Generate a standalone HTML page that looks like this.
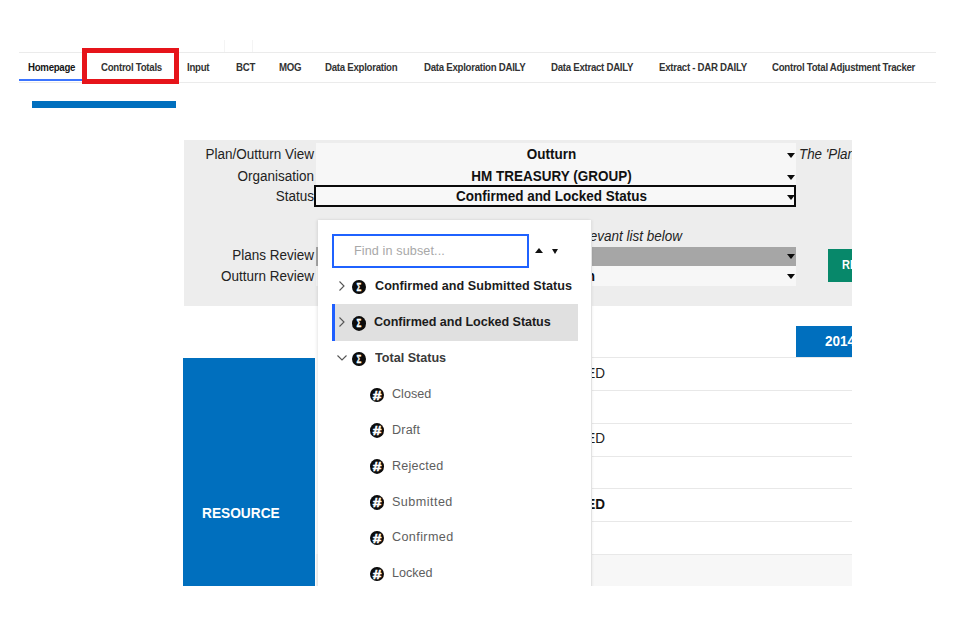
<!DOCTYPE html>
<html lang="en">
<head>
<meta charset="utf-8">
<title>Control Totals</title>
<style>
html,body{margin:0;padding:0;background:#fff;}
body{width:960px;height:640px;position:relative;overflow:hidden;font-family:"Liberation Sans",sans-serif;color:#222;}
.abs{position:absolute;}
/* nav */
#nav{position:absolute;left:19px;top:52px;width:917px;height:29px;border-top:1px solid #ebebeb;border-bottom:1px solid #ebebeb;}
.tab{position:absolute;top:0;height:29px;line-height:28.6px;font-size:10.5px;font-weight:bold;letter-spacing:-0.3px;color:#333;white-space:nowrap;transform:scaleX(0.92);transform-origin:left center;}
#hl{position:absolute;left:19px;top:78.9px;width:63px;height:2.5px;background:#3b74ff;}
#red{position:absolute;left:82px;top:47.7px;width:87px;height:26.8px;border:5px solid #e6141a;}
#bluebar{position:absolute;left:32px;top:101px;width:144px;height:7px;background:#006fbe;}
/* sheet */
#clip{position:absolute;left:0;top:0;width:852.3px;height:585.6px;overflow:hidden;}
.lbl{position:absolute;width:200px;text-align:right;font-size:14.67px;line-height:20px;color:#222;white-space:nowrap;transform:scaleX(0.92);transform-origin:right center;}
.val{position:absolute;left:315px;width:473px;text-align:center;font-size:14.67px;font-weight:bold;line-height:20px;color:#111;white-space:nowrap;transform:scaleX(0.92);transform-origin:center center;}
.arr{position:absolute;width:0;height:0;border-left:4px solid transparent;border-right:4px solid transparent;border-top:5px solid #0c0c0c;}
.it{position:absolute;font-size:14.67px;font-style:italic;line-height:20px;color:#222;white-space:nowrap;transform:scaleX(0.92);transform-origin:left center;}
/* table */
.hline{position:absolute;left:319px;width:534px;height:1px;background:#e8e8e8;}
.ed{position:absolute;width:300px;left:305px;text-align:right;font-size:14.67px;line-height:20px;color:#222;white-space:nowrap;transform:scaleX(0.92);transform-origin:right center;}
/* popup */
#pop{position:absolute;left:318px;top:220px;width:273px;height:400px;background:#fff;box-shadow:-1px 0 3px rgba(0,0,0,0.10), 1px 0 0 #e6e6e6, 2px 0 2px rgba(0,0,0,0.04);overflow:hidden;}
#search{position:absolute;left:13.6px;top:13.7px;width:193.4px;height:30.5px;border:2px solid #1f62ff;background:#fff;}
#search span{position:absolute;left:20.4px;top:-1px;line-height:32px;font-size:12.6px;letter-spacing:0.12px;color:#a8a8a8;white-space:nowrap;}
.row{position:absolute;left:13px;width:247px;height:36px;}
.row .t{position:absolute;top:0;line-height:36px;font-size:13.7px;white-space:nowrap;transform:scaleX(0.92);transform-origin:left center;}
.b{font-weight:bold;color:#1c1c1c;}
.ic{position:absolute;width:14px;height:14.6px;border-radius:50%;background:#0c0c0c;color:#fff;text-align:center;font-weight:bold;overflow:hidden;}
.ic span{display:block;width:100%;}
.ic .sg{font-size:10px;line-height:16.6px;-webkit-text-stroke:0.3px #fff;transform:scaleX(0.8);}
.ic .hs{font-size:13px;line-height:16.8px;-webkit-text-stroke:0.55px #fff;transform:scaleX(1.2);}
</style>
</head>
<body>

<!-- navigation tabs -->
<div id="nav">
  <div class="tab" style="left:9.2px;color:#161616">Homepage</div>
  <div class="tab" style="left:82px">Control Totals</div>
  <div class="tab" style="left:167.5px">Input</div>
  <div class="tab" style="left:217px">BCT</div>
  <div class="tab" style="left:259.8px">MOG</div>
  <div class="tab" style="left:306.3px">Data Exploration</div>
  <div class="tab" style="left:405px">Data Exploration DAILY</div>
  <div class="tab" style="left:531.5px">Data Extract DAILY</div>
  <div class="tab" style="left:639.7px">Extract - DAR DAILY</div>
  <div class="tab" style="left:753px">Control Total Adjustment Tracker</div>
</div>
<div id="hl"></div>
<div class="abs" style="left:224px;top:40px;width:1px;height:12px;background:#f4f4f4"></div>
<div class="abs" style="left:252px;top:40px;width:1px;height:12px;background:#f4f4f4"></div>
<div id="red"></div>
<div id="bluebar"></div>

<!-- grey selection panel -->
<div id="clip">
  <div class="abs" style="left:183.5px;top:140.4px;width:669px;height:165.8px;background:#ededed"></div>
  <div class="abs" style="left:315.5px;top:143px;width:480.7px;height:64px;background:#f7f7f7"></div>
  <div class="lbl" style="left:113.5px;top:144px">Plan/Outturn View</div>
  <div class="lbl" style="left:113.5px;top:166px">Organisation</div>
  <div class="lbl" style="left:113.5px;top:185.6px">Status</div>
  <div class="val" style="top:144.2px">Outturn</div>
  <div class="val" style="top:166.2px">HM TREASURY (GROUP)</div>
  <div class="abs" style="left:313.9px;top:185.3px;width:478.2px;height:17.3px;border:2.6px solid #0a0a0a;background:#f8f8f8"></div>
  <div class="val" style="top:186.2px">Confirmed and Locked Status</div>
  <div class="arr" style="left:786.8px;top:153.2px"></div>
  <div class="arr" style="left:786.8px;top:174.9px"></div>
  <div class="arr" style="left:786.8px;top:194.7px"></div>
  <div class="it" style="left:798.6px;top:144px;transform:scaleX(0.91)">The 'Plan/Outturn View' selection determines the list</div>

  <div class="it" style="left:382px;width:300px;text-align:right;top:225.5px;transform-origin:right center">Select from the relevant list below</div>
  <div class="lbl" style="left:113.5px;top:245.4px">Plans Review</div>
  <div class="lbl" style="left:113.5px;top:265.5px">Outturn Review</div>
  <div class="abs" style="left:315.5px;top:247px;width:480.2px;height:19px;background:#a6a6a6"></div>
  <div class="abs" style="left:315.5px;top:266px;width:480.2px;height:20.2px;background:#f7f7f7"></div>
  <div class="val" style="left:294.5px;width:300px;text-align:right;top:265.7px;transform-origin:right center">Final Outturn</div>
  <div class="arr" style="left:786.6px;top:254.3px"></div>
  <div class="arr" style="left:786.8px;top:274.1px"></div>
  <div class="abs" style="left:828.1px;top:248.6px;width:120px;height:33.8px;background:#07886a;color:#fff;font-weight:bold;font-size:13.4px;line-height:32.6px;white-space:nowrap"><span style="position:absolute;left:13.6px;transform:scaleX(0.82);transform-origin:left center">REFRESH</span></div>

<!-- table behind popup -->
<div class="abs" style="left:183px;top:358px;width:132px;height:228px;background:#006fbe"></div>
<div class="abs" style="left:201.6px;top:502.6px;font-size:14.67px;font-weight:bold;line-height:20px;color:#fff;white-space:nowrap;transform:scaleX(0.935);transform-origin:left center">RESOURCE</div>
<div class="abs" style="left:796px;top:326.3px;width:58px;height:30.7px;background:#006fbe;overflow:hidden;color:#fff;font-weight:bold;font-size:14.67px;line-height:30px;white-space:nowrap"><span style="position:absolute;left:29.3px;transform:scaleX(0.92);transform-origin:left center">2014-15</span></div>
<div class="abs" style="left:316px;top:554px;width:538px;height:32px;background:#f7f7f7"></div>
<div class="hline" style="top:357px"></div>
<div class="hline" style="top:390px"></div>
<div class="hline" style="top:423px"></div>
<div class="hline" style="top:456px"></div>
<div class="hline" style="top:488px"></div>
<div class="hline" style="top:521px"></div>
<div class="hline" style="top:554px"></div>
<div class="ed" style="top:363px">RING-FENCED</div>
<div class="ed" style="top:428px">NON RING-FENCED</div>
<div class="ed" style="top:494px;font-weight:bold;color:#111">TOTAL RING-FENCED</div>

<!-- subset picker popup -->
<div id="pop">
  <div id="search"><span>Find in subset...</span></div>
  <div class="arr" style="left:216.6px;top:28.2px;border-left-width:4px;border-right-width:4px;border-top:none;border-bottom:5.5px solid #111"></div>
  <div class="arr" style="left:233.6px;top:28.8px;border-left-width:3.9px;border-right-width:3.9px;border-top:5.4px solid #111"></div>

  <div class="row" style="top:48px">
    <svg class="abs" style="left:7px;top:11.6px" width="8" height="12" viewBox="0 0 8 12"><path d="M1.5 1.5 L6 6 L1.5 10.5" fill="none" stroke="#555" stroke-width="1.1"/></svg>
    <div class="ic" style="left:21.2px;top:11.8px"><span class="sg">Σ</span></div>
    <div class="t b" style="left:43.5px;letter-spacing:0.04px">Confirmed and Submitted Status</div>
  </div>
  <div class="row" style="top:84.4px;left:13.6px;height:36.2px;background:#e0e0e0;border-left:3.4px solid #1f5fff;width:243px">
    <svg class="abs" style="left:3.1px;top:11.6px" width="8" height="12" viewBox="0 0 8 12"><path d="M1.5 1.5 L6 6 L1.5 10.5" fill="none" stroke="#555" stroke-width="1.1"/></svg>
    <div class="ic" style="left:17.5px;top:11.6px"><span class="sg">Σ</span></div>
    <div class="t b" style="left:39.6px;letter-spacing:-0.07px">Confirmed and Locked Status</div>
  </div>
  <div class="row" style="top:120px">
    <svg class="abs" style="left:5px;top:14px" width="12" height="8" viewBox="0 0 12 8"><path d="M1.5 1.5 L6 6 L10.5 1.5" fill="none" stroke="#555" stroke-width="1.1"/></svg>
    <div class="ic" style="left:21.2px;top:11.8px"><span class="sg">Σ</span></div>
    <div class="t b" style="left:43.5px;color:#3a3a3a">Total Status</div>
  </div>
  <div class="row" style="top:156px"><div class="ic" style="left:38.9px;top:11.6px"><span class="hs">#</span></div><div class="t" style="left:60.8px;color:#5e5e5e">Closed</div></div>
  <div class="row" style="top:191.8px"><div class="ic" style="left:38.9px;top:11.6px"><span class="hs">#</span></div><div class="t" style="left:60.8px;color:#5e5e5e;letter-spacing:0.2px">Draft</div></div>
  <div class="row" style="top:227.6px"><div class="ic" style="left:38.9px;top:11.6px"><span class="hs">#</span></div><div class="t" style="left:60.8px;color:#5e5e5e;letter-spacing:0.25px">Rejected</div></div>
  <div class="row" style="top:263.5px"><div class="ic" style="left:38.9px;top:11.6px"><span class="hs">#</span></div><div class="t" style="left:60.8px;color:#5e5e5e;letter-spacing:0.5px">Submitted</div></div>
  <div class="row" style="top:299.3px"><div class="ic" style="left:38.9px;top:11.6px"><span class="hs">#</span></div><div class="t" style="left:60.8px;color:#5e5e5e;letter-spacing:0.42px">Confirmed</div></div>
  <div class="row" style="top:335.1px"><div class="ic" style="left:38.9px;top:11.6px"><span class="hs">#</span></div><div class="t" style="left:60.8px;color:#5e5e5e">Locked</div></div>
</div>
</div>

</body>
</html>
